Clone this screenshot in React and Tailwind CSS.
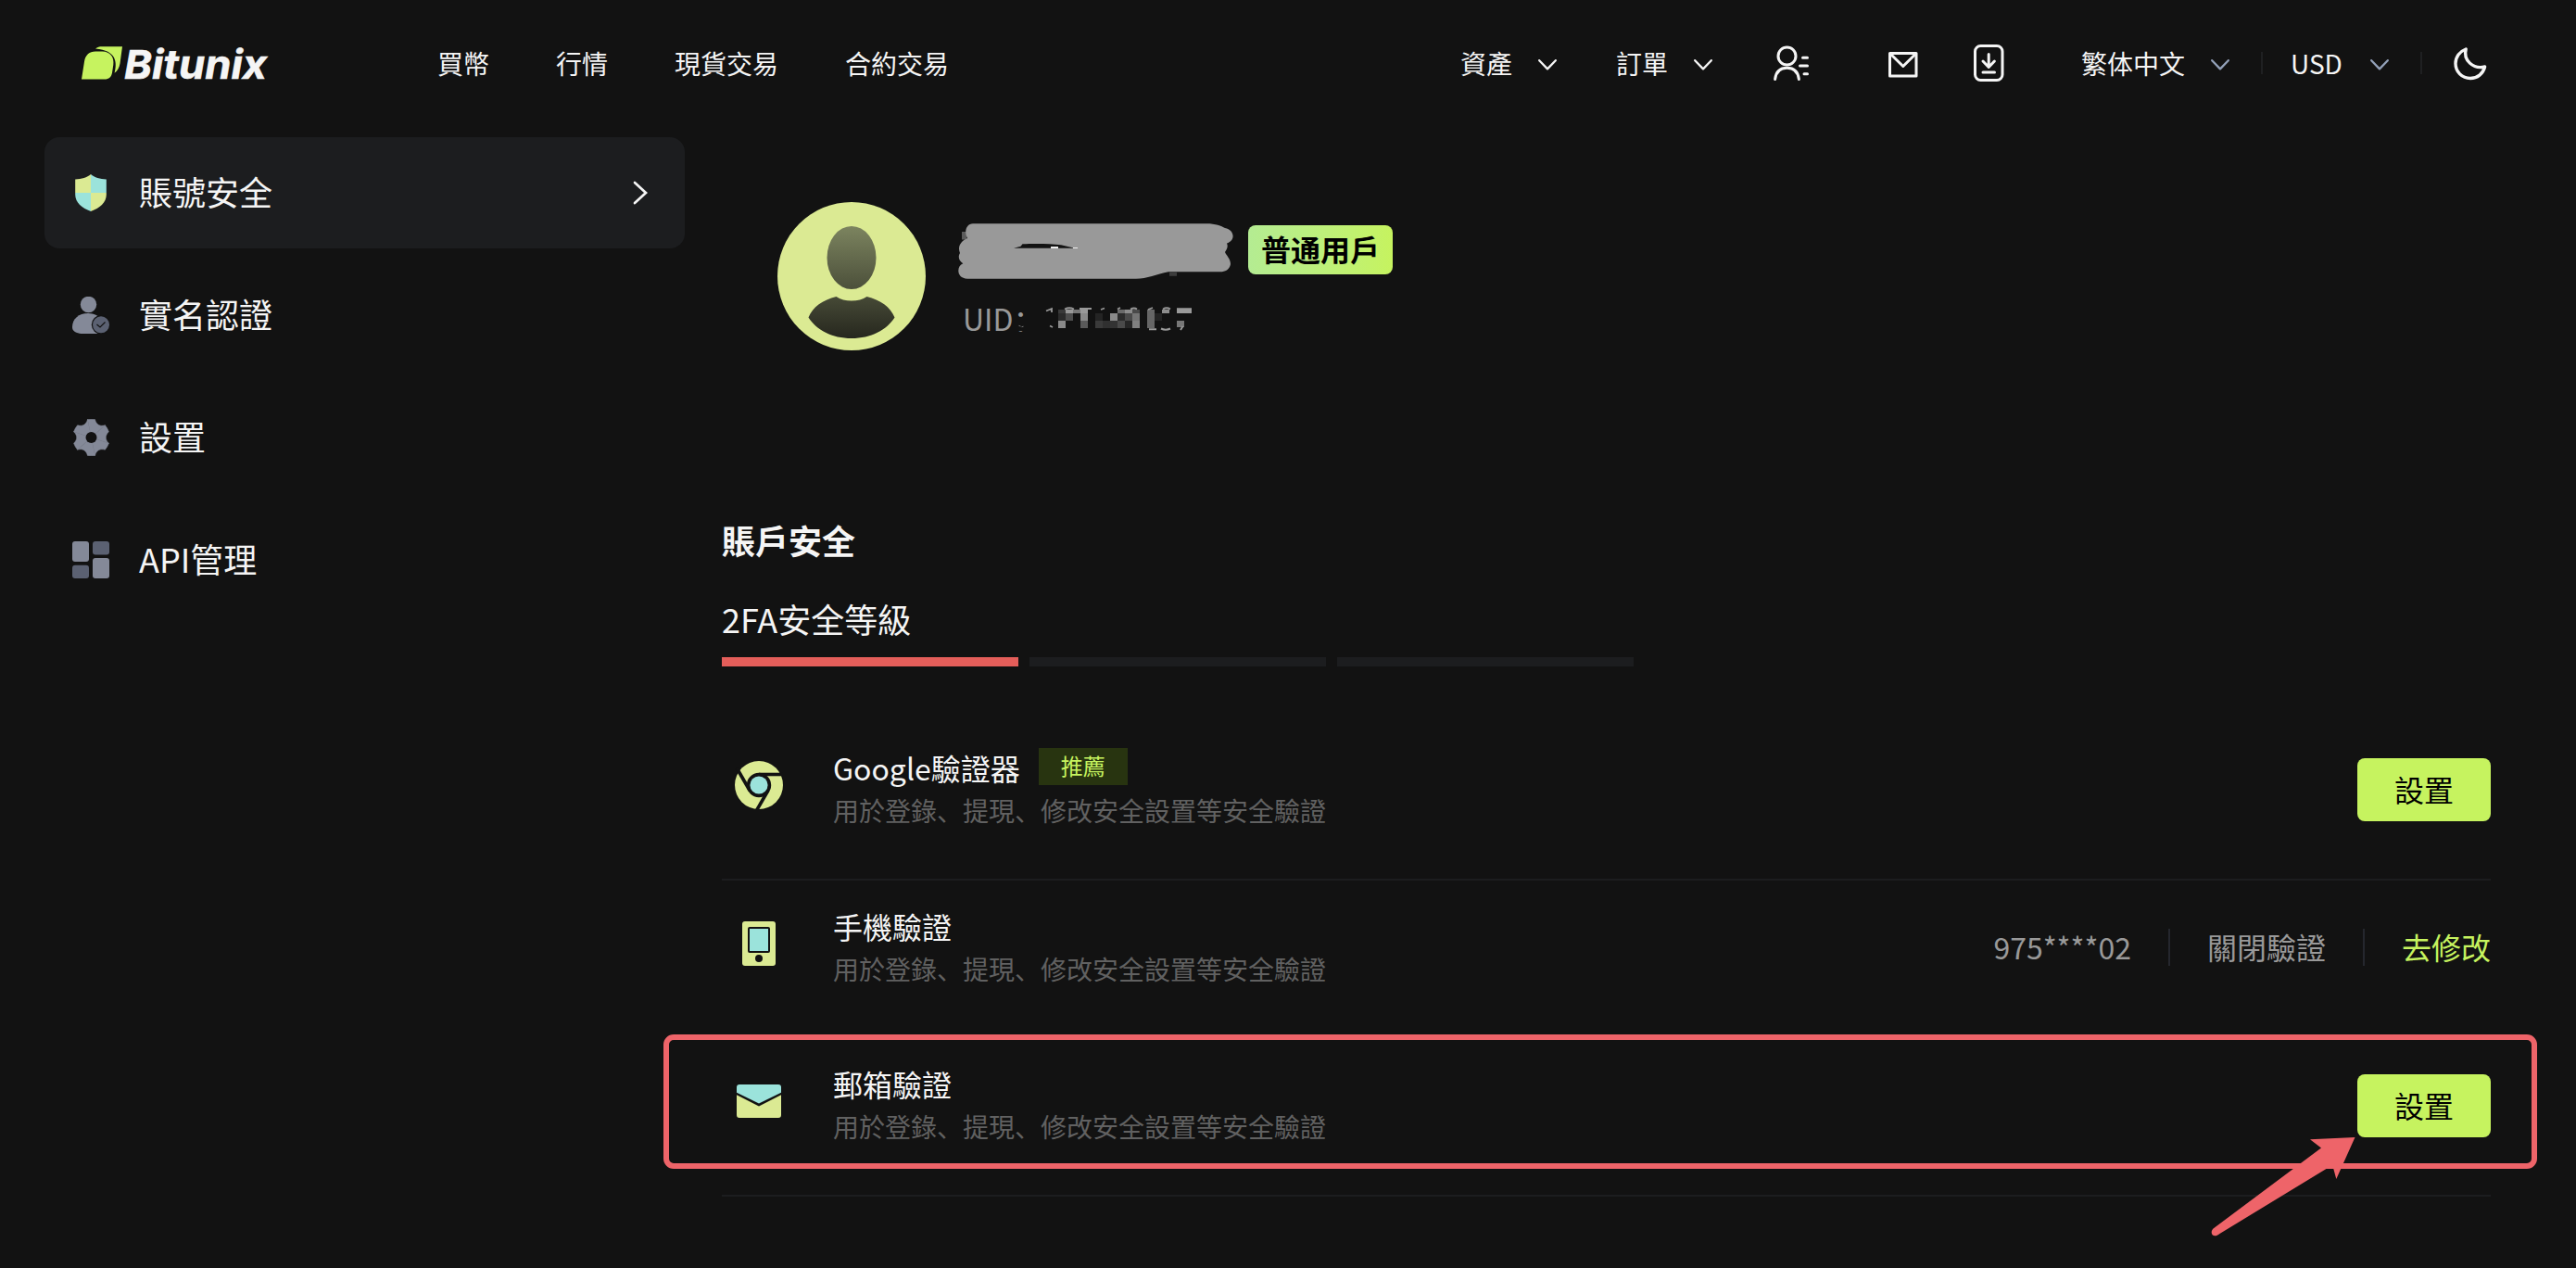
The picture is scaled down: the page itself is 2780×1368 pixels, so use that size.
const NAV = ['買幣', '行情', '現貨交易', '合約交易']

const ChevronDown = ({ className }) => (
  <svg viewBox="0 0 20 12" fill="none" stroke="currentColor" strokeWidth="2.300" strokeLinecap="round" strokeLinejoin="round" className={`mt-[3px] h-3 w-5 shrink-0 ${className}`}>
    <path d="M1.200 1.200 10 10.400 18.800 1.200" />
  </svg>
)

const Logo = () => (
  <svg viewBox="0 0 200 37" className="h-[37px] w-[200px] shrink-0 overflow-visible">
    <path d="M0 35.600 3 16.500C4 9.500 8.500 5.600 15 5.600h7.500C31 5.600 35.500 12 34.300 20l-1.300 8.500C32.300 33 29.500 35.600 25 35.600Z" fill="#c6f35f" />
    <path d="M15 2.400C17 .900 19.300.300 22 .300h22L41.500 18.500C40.800 23 39 26 35.600 28.800 38.500 17 38 4.500 15 2.400Z" fill="#c6f35f" />
    <text x="46" y="35.200" textLength="154" lengthAdjust="spacingAndGlyphs" fill="#f5f5f5" stroke="#f5f5f5" strokeWidth="0.600" className="font-['Inter',sans-serif] text-[43px] font-bold italic">
      Bitunix
    </text>
  </svg>
)

const UserIcon = () => (
  <svg viewBox="0 0 40 40" fill="none" stroke="#f5f5f5" strokeWidth="3" strokeLinecap="round" className="size-10 shrink-0">
    <circle cx="15.500" cy="12.500" r="9.500" />
    <path d="M2.600 37.500C3.500 29.500 8 25.200 15.500 25.200S27.500 29.500 28.400 37.500" />
    <path d="M32.500 14.200h5M29.500 23h8M34 31.700h3.500" />
  </svg>
)

const MailIcon = () => (
  <svg viewBox="0 0 34 30" fill="none" stroke="#f5f5f5" strokeWidth="3" strokeLinejoin="round" className="h-[30px] w-[34px] shrink-0">
    <path d="M2.500 2.500h28.500v24.500h-28.500Z" />
    <path d="M3 3 16.800 16.500 30.500 3" />
  </svg>
)

const DownloadIcon = () => (
  <svg viewBox="0 0 34 40" fill="none" stroke="#f5f5f5" strokeWidth="3" strokeLinecap="round" strokeLinejoin="round" className="h-10 w-[34px] shrink-0">
    <rect x="2.500" y="1.500" width="29.500" height="37" rx="6" />
    <path d="M17.200 10.500v13M11 18l6.200 6.500 6.200-6.500M11 30h12.500" />
  </svg>
)

const MoonIcon = () => (
  <svg viewBox="0 0 36 36" fill="none" stroke="#f5f5f5" strokeWidth="3.400" strokeLinejoin="round" className="size-9 shrink-0">
    <path d="M13.200 2C6.500 4.500 2 10.500 2 17.500 2 26.500 9 33.500 18 33.500c7.500 0 13.800-5 15.600-12.500C21 24 10 14 13.200 2Z" />
  </svg>
)

const ShieldIcon = () => (
  <svg viewBox="0 0 40 40" className="size-10 shrink-0">
    <path d="M20 0C16 3.500 10 5 3.200 5.500V20H20Z" fill="#dbea93" />
    <path d="M20 0c4 3.500 10 5 16.800 5.500V20H20Z" fill="#9be3db" />
    <path d="M3.200 20H20v20C10.500 36.500 3.200 30.500 3.200 22Z" fill="#9be3db" />
    <path d="M36.800 20H20v20c9.500-3.500 16.800-9.500 16.800-18Z" fill="#dbea93" />
  </svg>
)

const VerifyIcon = () => (
  <svg viewBox="0 0 40 40" className="size-10 shrink-0">
    <circle cx="17.500" cy="8.500" r="8.700" fill="#848998" />
    <path d="M0 33C0 24 7 18 17 18c8 0 15 4 17 11L27 40c-3 .300-7 .300-12 .300C8 40.300 0 39 0 33Z" fill="#848998" />
    <circle cx="31" cy="30.300" r="10.200" fill="#121212" />
    <circle cx="31" cy="30.300" r="9" fill="#5b6172" />
    <path d="m26.500 30 3.500 3 5.500-5.500" fill="none" stroke="#121212" strokeWidth="1.200" />
  </svg>
)

const GearIcon = () => (
  <svg viewBox="-20.500 -20 40 40" className="size-10 shrink-0">
    {[0, 60, 120, 180, 240, 300].map((deg) => (
      <path
        key={deg}
        d="M0 0-4-19.500Q0-20.200 4-19.500C5.500-13.800 9.200-11.700 14.900-13.200Z"
        transform={`rotate(${deg})`}
        fill="#848998"
        stroke="#848998"
        strokeWidth="0.500"
        strokeLinejoin="round"
      />
    ))}
    <circle r="6" fill="#121212" />
  </svg>
)

const GridIcon = () => (
  <svg viewBox="0 0 40 40" className="size-10 shrink-0">
    <rect width="18" height="22" rx="3" fill="#848998" />
    <rect x="22" width="18" height="14.500" rx="3" fill="#5b6172" />
    <rect y="25.700" width="18" height="14.300" rx="3" fill="#5b6172" />
    <rect x="22" y="18" width="18" height="22" rx="3" fill="#848998" />
  </svg>
)

const ChromeIcon = () => (
  <svg viewBox="-26 -26 52 52" className="size-[52px]">
    <circle r="26" fill="#dbea93" />
    <circle r="13.200" fill="#121212" />
    {[0, 120, 240].map((deg) => (
      <path key={deg} d="M0-11.500H28" stroke="#121212" strokeWidth="3.600" transform={`rotate(${deg})`} />
    ))}
    <circle r="9.600" fill="#9be3db" />
  </svg>
)

const PhoneIcon = () => (
  <svg viewBox="0 0 36 48" className="h-12 w-9">
    <rect width="36" height="48" rx="3" fill="#dbea93" />
    <rect x="6" y="6" width="24" height="28" rx="2" fill="#121212" />
    <rect x="8" y="8" width="20" height="24" fill="#9be3db" />
    <circle cx="18" cy="40" r="4" fill="#121212" />
  </svg>
)

const EmailIcon = () => (
  <svg viewBox="0 0 48 36" className="h-9 w-12">
    <path d="M3 0h42a3 3 0 0 1 3 3v5.700L24 20.500 0 8.700V3a3 3 0 0 1 3-3Z" fill="#9be3db" />
    <path d="M0 11.300 24 23.500 48 11.300V33a3 3 0 0 1-3 3H3a3 3 0 0 1-3-3Z" fill="#dbea93" />
  </svg>
)

const Avatar = () => (
  <svg viewBox="0 0 160 160" className="size-40 shrink-0">
    <defs>
      <linearGradient id="avatar" gradientUnits="userSpaceOnUse" x1="0" y1="26" x2="0" y2="147">
        <stop offset="0" stopColor="#7c845f" />
        <stop offset="1" stopColor="#26271e" />
      </linearGradient>
    </defs>
    <circle cx="80" cy="80" r="80" fill="#dbea93" />
    <ellipse cx="80" cy="60" rx="26.500" ry="34" fill="url(#avatar)" />
    <path d="M63.500 102C72 108 88 108 96.500 102 111 105.500 122 113 126.500 124.500 118 138 101 147 80 147S42 138 33.500 124.500C38 113 49 105.500 63.500 102Z" fill="url(#avatar)" />
  </svg>
)

// Brush stroke over the account name
const NameMask = () => (
  <svg viewBox="5 11 300 60" className="h-[60px] w-[300px] shrink-0 overflow-visible">
    <path d="M8 20h5v8.500H8Z" fill="#5c5c5c" />
    <path d="M20 11.300H272C282 11.300 288 14 292 16 302 18 304 29 294 32.500 296 37 293 40 292 42 293 45 298 49 298 55 297 61 292 63.300 287 63.300H231C218 66 208 70.700 196 70.700H14C2 70.700 2 57 9.300 54.300 4 51 4 46 6 43 3 36 7 30 14 27 10 20 13 11.300 20 11.300Z" fill="#999" />
    <path d="M64 37.700 71.500 35.700 73.500 33.300C86 32.800 103 32.800 115 34.200L130 37.700Z" fill="#121212" />
    <path d="M104 36h8v2h-8ZM128 37h5v1h-5Z" fill="#eee" />
    <path d="M232 63.300h8v4.500h-8Z" fill="#3c3c3c" />
  </svg>
)

// [x, y, height, shade] of every 8px wide mosaic block
const MOSAIC = [
  [112, 4, 4, '#3a3a3a'], [120, 4, 4, '#999'], [128, 4, 4, '#777'], [136, 4, 4, '#999'],
  [176, 4, 4, '#6a6a6a'], [184, 4, 4, '#8c8c8c'], [192, 4, 4, '#4a4a4a'], [208, 4, 4, '#777'], [224, 4, 4, '#8c8c8c'], [240, 4, 4, '#9a9a9a'], [248, 4, 4, '#9a9a9a'],
  [112, 8, 8, '#2c2c2c'], [120, 8, 8, '#4e4e4e'], [136, 8, 8, '#8a8a8a'], [152, 8, 8, '#242424'], [168, 8, 8, '#8a8a8a'], [176, 8, 8, '#2c2c2c'], [184, 8, 8, '#4a4a4a'], [192, 8, 8, '#757575'], [208, 4, 20, '#666'], [216, 8, 8, '#242424'],
  [112, 16, 8, '#8a8a8a'], [136, 16, 8, '#5a5a5a'], [152, 16, 8, '#3a3a3a'], [160, 16, 8, '#303030'], [168, 16, 8, '#333'], [176, 16, 8, '#4a4a4a'], [184, 16, 8, '#262626'], [192, 16, 8, '#808080'], [240, 16, 7, '#777'],
]

const UidMask = () => (
  <svg viewBox="5 -5 260 40" className="h-10 w-[260px]">
    <path d="M66 15h14v12H66Z" fill="#121212" />
    <path d="M69.500 21.300l2 .7M72.500 22.700l2-.5" stroke="#777" strokeWidth="1" />
    {MOSAIC.map(([x, y, h, shade]) => (
      <rect key={`${x}-${y}`} x={x} y={y} width="8" height={h} fill={shade} />
    ))}
    <path d="M99 5.500 105 3v4M103 21.500l3 1.500M119 3.500q5-2.500 10 0M135 3h13M158 4l4-1.500M176 3.500l3-1.500M190 3.500q4-2 7 0M209 4l5-2M225 3.500q4-2.500 8 0M240 3.200h16" fill="none" stroke="#999" strokeWidth="1.800" />
    <path d="M210 25.300h8M223 24.500q5 2.500 10 0M244 26l2.500-4" fill="none" stroke="#999" strokeWidth="2" />
  </svg>
)

const Arrow = () => (
  <svg viewBox="0 0 170 120" className="absolute top-[99.5px] left-[1601px] h-[120px] w-[170px]">
    <path d="M161.500 7 113 9.200 125 18.500 8.500 105.500C4 110 8.500 117 15.500 111L130.500 41H138.300L141.300 52Z" fill="#ee6469" />
  </svg>
)

const MENU = [
  { label: '賬號安全', icon: <ShieldIcon />, active: true },
  { label: '實名認證', icon: <VerifyIcon /> },
  { label: '設置', icon: <GearIcon /> },
  { label: 'API管理', icon: <GridIcon /> },
]

const Header = () => (
  <header className="flex h-[136px] items-center pr-24 pl-[88px] text-[28px] leading-10">
    <Logo />
    <nav className="ml-[184px] flex gap-[72px]">
      {NAV.map((item) => (
        <a key={item} className="whitespace-nowrap">{item}</a>
      ))}
    </nav>
    <div className="ml-auto flex items-center whitespace-nowrap">
      <span>資產</span>
      <ChevronDown className="ml-7" />
      <span className="ml-16">訂單</span>
      <ChevronDown className="ml-7" />
      <div className="ml-[65px] flex items-center">
        <UserIcon />
        <div className="mt-1 ml-[84px] flex"><MailIcon /></div>
        <div className="ml-[58px] flex"><DownloadIcon /></div>
      </div>
      <span className="ml-[83px]">繁体中文</span>
      <ChevronDown className="ml-7 text-[#92a0b8]" />
      <i className="ml-[34px] h-6 w-0.5 bg-[#1f2022]" />
      <span className="ml-[30px] w-[56px]">USD</span>
      <ChevronDown className="ml-[30px] text-[#92a0b8]" />
      <i className="ml-[34px] h-6 w-0.5 bg-[#1f2022]" />
      <div className="mt-0.5 ml-[34px]"><MoonIcon /></div>
    </div>
  </header>
)

const Sidebar = () => (
  <aside className="flex w-[691px] shrink-0 flex-col gap-3">
    {MENU.map(({ label, icon, active }) => (
      <div key={label} className={`flex h-[120px] items-center rounded-2xl pr-10 pl-[30px] ${active ? 'bg-[#1c1d1f]' : ''}`}>
        {icon}
        <span className="ml-8 pb-1 text-[36px] leading-[54px]">{label}</span>
        {active && (
          <svg viewBox="0 0 16 26" fill="none" stroke="#f5f5f5" strokeWidth="2.700" strokeLinecap="round" className="ml-auto h-[26px] w-4">
            <path d="M2 2 14 13 2 24" />
          </svg>
        )}
      </div>
    ))}
  </aside>
)

const Profile = () => (
  <section className="flex pt-[70px] pl-[60px]">
    <Avatar />
    <div className="ml-9 pt-[23px]">
      <div className="flex items-start">
        <NameMask />
        <span className="mt-0.5 ml-3 flex h-[53px] w-[156px] items-center justify-center rounded-lg bg-linear-to-r from-[#b4ec92] to-[#c6f35f] pb-1 text-[32px] font-bold whitespace-nowrap text-black">
          普通用戶
        </span>
      </div>
      <div className="relative mt-[22px] h-[42px] pl-1 text-[32px] leading-10 text-[#999]">
        UID：
        <div className="absolute top-0.5 left-0"><UidMask /></div>
      </div>
    </div>
  </section>
)

const SetButton = () => (
  <button className="mt-[38.5px] h-[68px] w-36 rounded-lg bg-[#c6f35f] pb-[3px] text-[32px] text-black">設置</button>
)

const VerifyRow = ({ icon, title, tag, children, overlay }) => (
  <div className="relative flex h-[170.5px] items-start border-b-2 border-[#1c1d1f]">
    <div className="mt-[41.5px] flex h-[52px] w-20 items-center justify-center">{icon}</div>
    <div className="ml-10 pt-[24.5px]">
      <div className="flex h-12 items-center text-[32px] leading-[48px]">
        {title}
        {tag && (
          <span className="mb-[3px] ml-5 flex h-10 w-24 items-center justify-center bg-[#283410] pb-0.5 text-[24px] text-[#c6f35f]">{tag}</span>
        )}
      </div>
      <p className="text-[28px] leading-[44px] text-[#616161]">用於登錄、提現、修改安全設置等安全驗證</p>
    </div>
    <div className="ml-auto">{children}</div>
    {overlay}
  </div>
)

const Security = () => (
  <section>
    <h2 className="mt-[177px] text-[36px] leading-[54px] font-bold">賬戶安全</h2>
    <p className="mt-[31px] text-[36px] leading-[54px]">2FA安全等級</p>
    <div className="mt-[15px] flex gap-3">
      <i className="h-2.5 w-80 bg-[#e45e5a]" />
      <i className="h-2.5 w-80 bg-[#1c1d1f]" />
      <i className="h-2.5 w-80 bg-[#1c1d1f]" />
    </div>
    <div className="mt-[60.5px]">
      <VerifyRow icon={<ChromeIcon />} title="Google驗證器" tag="推薦">
        <SetButton />
      </VerifyRow>
      <VerifyRow icon={<PhoneIcon />} title="手機驗證">
        <div className="mt-[52px] flex h-10 items-center gap-10 text-[32px] leading-[38px] text-[#999]">
          <span className="pb-0.5">975****02</span>
          <i className="h-full w-0.5 bg-[#25272e]" />
          <span className="pb-0.5">關閉驗證</span>
          <i className="h-full w-0.5 bg-[#25272e]" />
          <a className="pb-0.5 text-[#c6f35f]">去修改</a>
        </div>
      </VerifyRow>
      <VerifyRow
        icon={<EmailIcon />}
        title="郵箱驗證"
        overlay={
          <>
            <div className="absolute -top-[5px] -right-[50px] bottom-[28px] -left-[63px] rounded-[11px] border-6 border-[#ee6469]" />
            <Arrow />
          </>
        }
      >
        <SetButton />
      </VerifyRow>
    </div>
  </section>
)

export default function App() {
  return (
    <div className="h-[1368px] w-[2780px] overflow-hidden bg-[#121212] font-['Noto_Sans_CJK_SC',sans-serif] text-[#f5f5f5]">
      <Header />
      <div className="flex gap-10 pt-3 pr-[92px] pl-12">
        <Sidebar />
        <main className="flex-1">
          <Profile />
          <Security />
        </main>
      </div>
    </div>
  )
}
